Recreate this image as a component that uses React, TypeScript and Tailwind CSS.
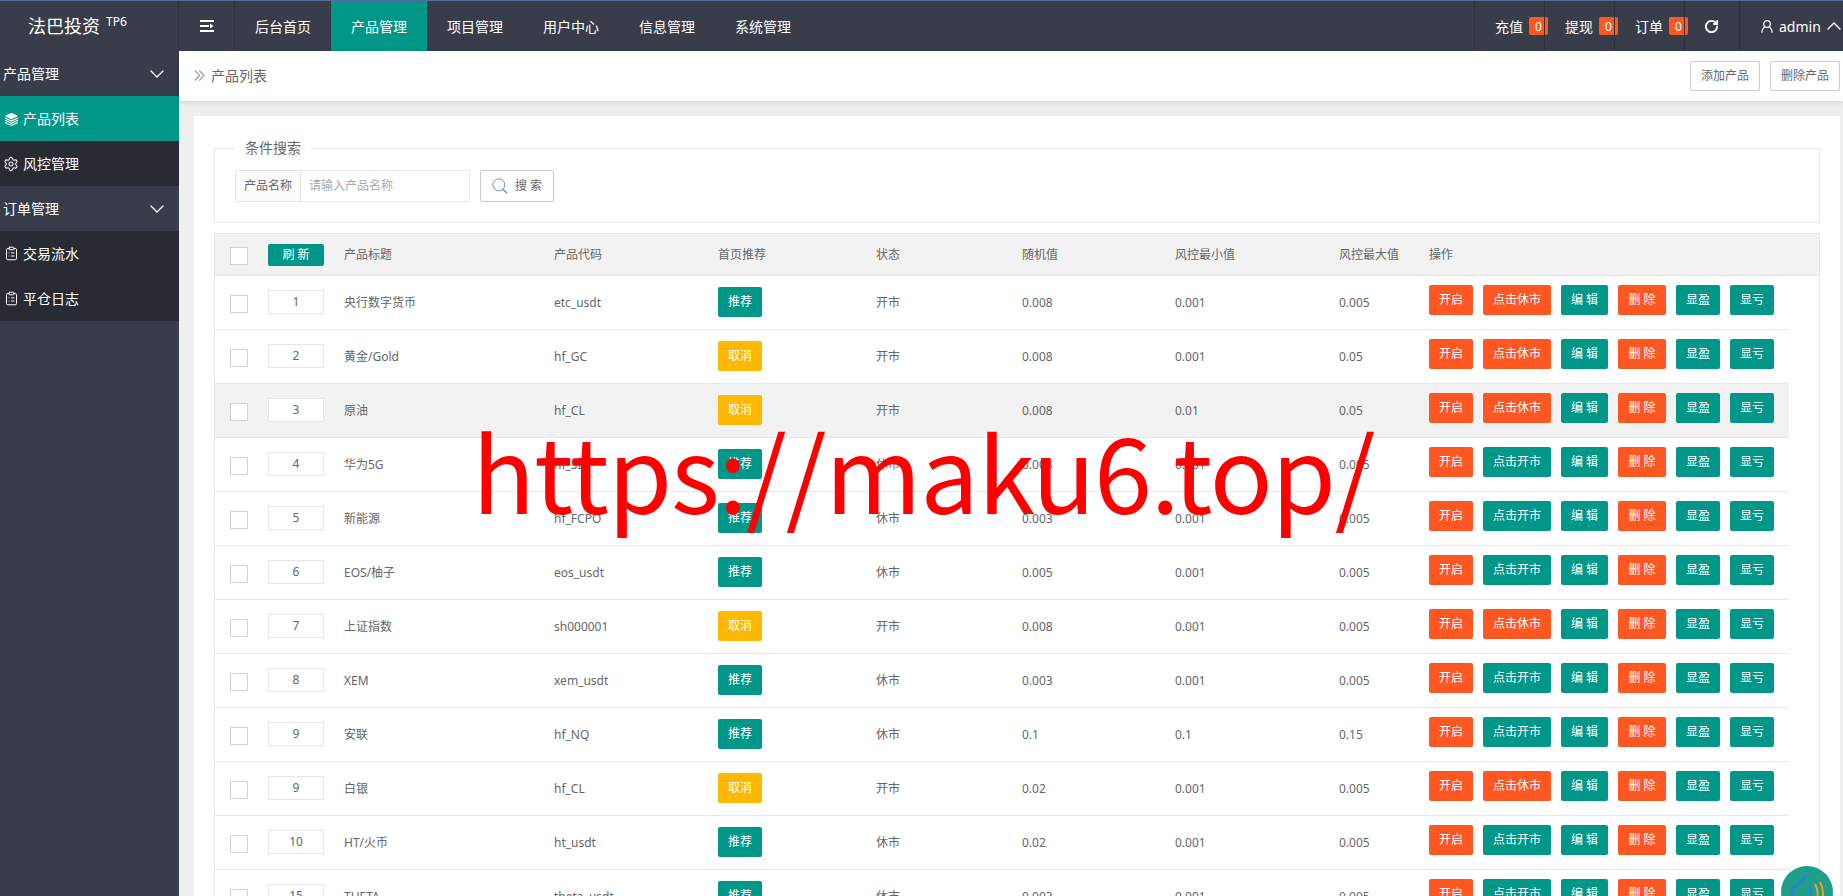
import React from "react";
import { ChevronDown, ChevronUp, ClipboardList, RotateCw, Settings } from "lucide-react";

type Row = {
  n: string; title: string; code: string; rec: boolean; open: boolean;
  rand: string; min: string; max: string; hl?: boolean;
};

const rows: Row[] = [
  { n: "1", title: "央行数字货币", code: "etc_usdt", rec: true, open: true, rand: "0.008", min: "0.001", max: "0.005" },
  { n: "2", title: "黄金/Gold", code: "hf_GC", rec: false, open: true, rand: "0.008", min: "0.001", max: "0.05" },
  { n: "3", title: "原油", code: "hf_CL", rec: false, open: true, rand: "0.008", min: "0.01", max: "0.05", hl: true },
  { n: "4", title: "华为5G", code: "hf_SI", rec: true, open: false, rand: "0.008", min: "0.001", max: "0.005" },
  { n: "5", title: "新能源", code: "hf_FCPO", rec: true, open: false, rand: "0.003", min: "0.001", max: "0.005" },
  { n: "6", title: "EOS/柚子", code: "eos_usdt", rec: true, open: false, rand: "0.005", min: "0.001", max: "0.005" },
  { n: "7", title: "上证指数", code: "sh000001", rec: false, open: true, rand: "0.008", min: "0.001", max: "0.005" },
  { n: "8", title: "XEM", code: "xem_usdt", rec: true, open: false, rand: "0.003", min: "0.001", max: "0.005" },
  { n: "9", title: "安联", code: "hf_NQ", rec: true, open: false, rand: "0.1", min: "0.1", max: "0.15" },
  { n: "9", title: "白银", code: "hf_CL", rec: false, open: true, rand: "0.02", min: "0.001", max: "0.005" },
  { n: "10", title: "HT/火币", code: "ht_usdt", rec: true, open: false, rand: "0.02", min: "0.001", max: "0.005" },
  { n: "15", title: "THETA", code: "theta_usdt", rec: true, open: false, rand: "0.003", min: "0.001", max: "0.005" },
];

const GRID = "grid grid-cols-[53px_76px_210px_164px_158px_146px_153px_164px_90px_1fr] items-center";

function Btn({ color, className, children }: { color: "teal" | "orange" | "yellow"; className?: string; children: React.ReactNode }) {
  const bg = color === "teal" ? "bg-[#009688]" : color === "orange" ? "bg-[#ff5722]" : "bg-[#ffb800]";
  return (
    <span className={`${bg} ${className ?? ""} flex h-[30px] items-center justify-center whitespace-pre rounded-[2px] text-[12px] text-white`}>
      {children}
    </span>
  );
}

function LayersIcon() {
  return (
    <svg width="15" height="14" viewBox="0 0 14 14" fill="none" className="shrink-0">
      <path d="M7 .8 13.6 4 7 7.2.4 4z" fill="#fff" />
      <path d="M.6 6 7 9.1 13.4 6M.6 8.2 7 11.3l6.4-3.1M.6 10.4 7 13.5l6.4-3.1" stroke="#fff" strokeWidth="1.1" />
    </svg>
  );
}

function SideHead({ label }: { label: string }) {
  return (
    <div className="flex h-[45px] items-center justify-between pl-[3px] pr-[10px] text-[14px] text-white">
      <span>{label}</span>
      <ChevronDown size={24} strokeWidth={1.3} />
    </div>
  );
}

function SideItem({ icon, label, active }: { icon: React.ReactNode; label: string; active?: boolean }) {
  return (
    <div className={`flex h-[45px] items-center pl-[4px] text-[14px] text-white ${active ? "bg-[#009688]" : "bg-[#282b33]"}`}>
      <span className="flex w-[19px] shrink-0 items-center">{icon}</span>
      <span>{label}</span>
    </div>
  );
}

function Stat({ label }: { label: string }) {
  return (
    <div className="flex h-full w-[70px] shrink-0 items-center border-l border-[#2f323c] pl-[20px] text-[14px] text-white">
      <span className="shrink-0">{label}</span>
      <span className="ml-[6px] flex h-[18px] w-[19px] shrink-0 items-center justify-center rounded-[2px] bg-[#ff5722] pt-[2px] text-[12px] text-white">0</span>
    </div>
  );
}

export default function App() {
  return (
    <div className="relative flex h-screen flex-col overflow-hidden bg-[#eeeeee] font-['Noto_Sans','Noto_Sans_CJK_SC',sans-serif] text-[12px] text-[#666666]">
      <header className="flex h-[51px] shrink-0 border-t border-[#5a6a9e] bg-[#393d49] text-white">
        <div className="flex w-[179px] shrink-0 items-center border-r border-[#2f323c] pl-[28px]">
          <span className="text-[18px] leading-none">法巴投资</span>
          <span className="mb-[8px] ml-[6px] text-[12px] leading-none">TP6</span>
        </div>
        <div className="flex w-[56px] shrink-0 items-center justify-center border-r border-[#2f323c]">
          <svg width="14" height="12" viewBox="0 0 14 12" fill="#fff">
            <rect x="0" y="0" width="14" height="2" />
            <rect x="0" y="5" width="9" height="2" />
            <path d="M10 3.5 13.5 6 10 8.5z" />
            <rect x="0" y="10" width="14" height="2" />
          </svg>
        </div>
        {["后台首页", "产品管理", "项目管理", "用户中心", "信息管理", "系统管理"].map((t, i) => (
          <div key={t} className={`flex w-[96px] shrink-0 items-center justify-center text-[14px] ${i === 1 ? "bg-[#009688]" : ""}`}>
            {t}
          </div>
        ))}
        <div className="ml-auto flex h-full">
          <Stat label="充值" />
          <Stat label="提现" />
          <Stat label="订单" />
          <div className="flex w-[55px] shrink-0 items-center border-l border-[#2f323c] pl-[19px]">
            <RotateCw size={15} strokeWidth={3} />
          </div>
          <div className="flex w-[104px] shrink-0 items-center border-l border-[#2f323c] pl-[21px] text-[14px]">
            <svg width="12" height="13" viewBox="0 0 12 13" fill="none" stroke="#fff" strokeWidth="1.2" className="shrink-0">
              <circle cx="6" cy="4" r="3.3" />
              <path d="M.8 12.8c.3-3.2 2-5.4 3.4-5.8M11.2 12.8c-.3-3.2-2-5.4-3.4-5.8" />
            </svg>
            <span className="ml-[6px]">admin</span>
            <ChevronUp size={24} strokeWidth={1.4} className="ml-px shrink-0" />
          </div>
        </div>
      </header>

      <div className="flex min-h-0 flex-1">
        <aside className="w-[179px] shrink-0 bg-[#393d49]">
          <SideHead label="产品管理" />
          <SideItem active label="产品列表" icon={<LayersIcon />} />
          <SideItem label="风控管理" icon={<Settings size={16} strokeWidth={1.6} className="-ml-px shrink-0" />} />
          <SideHead label="订单管理" />
          <SideItem label="交易流水" icon={<ClipboardList size={15} strokeWidth={1.6} className="shrink-0" />} />
          <SideItem label="平仓日志" icon={<ClipboardList size={15} strokeWidth={1.6} className="shrink-0" />} />
        </aside>

        <main className="flex min-w-0 flex-1 flex-col">
          <div className="flex h-[50px] shrink-0 items-center justify-between bg-white pl-[15px] pr-[3px] shadow-[0_1px_4px_rgba(0,0,0,0.15)]">
            <div className="mb-[1px] flex items-center gap-[6px] text-[14px] text-[#666666]">
              <svg width="11" height="11" viewBox="0 0 11 11" fill="none" stroke="#999999" strokeWidth="1.1">
                <path d="M.8.5 5.5 5.5.8 10.5M5.3.5 10 5.5 5.3 10.5" />
              </svg>
              <span>产品列表</span>
            </div>
            <div className="flex gap-[10px]">
              {["添加产品", "删除产品"].map((t) => (
                <span key={t} className="flex h-[30px] w-[70px] items-center justify-center rounded-[2px] border border-[#c9c9c9] text-[12px] text-[#666666]">
                  {t}
                </span>
              ))}
            </div>
          </div>

          <div className="mb-0 ml-[15px] mr-[3px] mt-[15px] flex-1 bg-white px-[20px] pt-[21px]">
            <fieldset className="mb-[10px] h-[86px] border border-[#e6e6e6] pl-[20px]">
              <legend className="px-[10px] text-[14px] leading-[22px] text-[#666666]">条件搜索</legend>
              <div className="mt-[11px] flex items-center">
                <div className="flex h-[32px] w-[235px] rounded-[2px] border border-[#e6e6e6]">
                  <span className="flex w-[65px] items-center justify-center border-r border-[#e6e6e6] bg-[#fbfbfb] text-[12px] text-[#666666]">产品名称</span>
                  <span className="flex items-center pl-[8px] text-[12px] text-[#aaaaaa]">请输入产品名称</span>
                </div>
                <div className="ml-[10px] flex h-[32px] w-[74px] items-center gap-[7px] rounded-[2px] border border-[#c9c9c9] pl-[11px] text-[12px] text-[#666666]">
                  <svg width="16" height="16" viewBox="0 0 16 16" fill="none" className="shrink-0">
                    <circle cx="6.8" cy="6.8" r="6" stroke="#6f93b8" strokeWidth="1" />
                    <path d="M11 11.4 15.2 15.4" stroke="#8a9aaa" strokeWidth="1.6" />
                  </svg>
                  <span className="whitespace-pre">搜 索</span>
                </div>
              </div>
            </fieldset>

            <div className="border-x border-t border-[#e6e6e6]">
              <div className={`${GRID} h-[42px] border-b border-[#e6e6e6] bg-[#f2f2f2]`}>
                <span className="ml-[15px] mt-[3px] h-[18px] w-[18px] border border-[#d2d2d2] bg-white" />
                <span className="flex h-[22px] w-[56px] items-center justify-center whitespace-pre rounded-[2px] bg-[#009688] text-white">刷 新</span>
                {["产品标题", "产品代码", "首页推荐", "状态", "随机值", "风控最小值", "风控最大值", "操作"].map((h) => (
                  <span key={h}>{h}</span>
                ))}
              </div>
              {rows.map((r, i) => (
                <div key={i} className={`${GRID} h-[54px] w-[1574px] border-b border-[#e6e6e6] ${r.hl ? "bg-[#f2f2f2]" : ""}`}>
                  <span className="ml-[15px] mt-[3px] h-[18px] w-[18px] border border-[#d2d2d2] bg-white" />
                  <span className="mb-[1px] flex h-[24px] w-[56px] items-center justify-center border border-[#e6e6e6] bg-white">{r.n}</span>
                  <span>{r.title}</span>
                  <span>{r.code}</span>
                  <div className="mb-[1px] flex"><Btn color={r.rec ? "teal" : "yellow"} className="w-[44px]">{r.rec ? "推荐" : "取消"}</Btn></div>
                  <span>{r.open ? "开市" : "休市"}</span>
                  <span>{r.rand}</span>
                  <span>{r.min}</span>
                  <span>{r.max}</span>
                  <div className="mb-[5px] flex gap-[10px]">
                    <Btn color="orange" className="w-[44px]">开启</Btn>
                    <Btn color={r.open ? "orange" : "teal"} className="w-[68px]">{r.open ? "点击休市" : "点击开市"}</Btn>
                    <Btn color="teal" className="w-[47px]">编 辑</Btn>
                    <Btn color="orange" className="w-[48px]">删 除</Btn>
                    <Btn color="teal" className="w-[44px]">显盈</Btn>
                    <Btn color="teal" className="w-[44px]">显亏</Btn>
                  </div>
                </div>
              ))}
            </div>
          </div>
        </main>
      </div>

      <div className="pointer-events-none absolute left-[472px] top-[394px] whitespace-nowrap font-['Noto_Sans_CJK_SC',sans-serif] text-[104px] leading-[150px] tracking-[-1.2px] text-[#ff0000]">
        https://maku6.top/
      </div>

      <svg width="52" height="52" viewBox="0 0 52 52" fill="none" className="absolute left-[1781px] top-[866px]">
        <circle cx="26" cy="26" r="26" fill="#1f9e8c" />
        <path d="M25.7 10 12.3 21.7 10.7 31" stroke="#2f7de0" strokeWidth="2.2" />
        <path d="M29.7 20V31" stroke="#2f7de0" strokeWidth="2" />
        <path d="M34 18Q38 25 36 33M39 16Q44 25 41 35" stroke="#f0a020" strokeWidth="2" />
      </svg>
    </div>
  );
}
